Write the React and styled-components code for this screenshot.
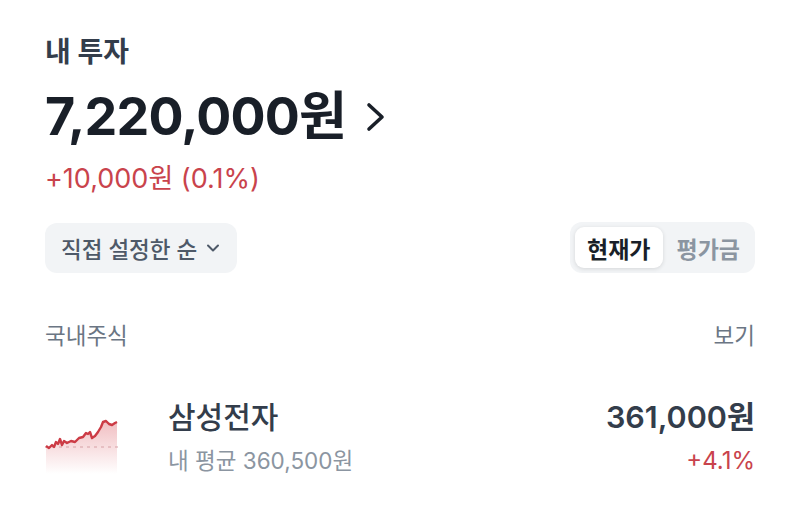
import styled, { createGlobalStyle } from "styled-components";

const Global = createGlobalStyle`
  body {
    margin: 0;
    background: #fff;
    font-family: "Inter", "Noto Sans CJK KR", sans-serif;
  }
`;

const stocks = [
  { name: "삼성전자", avg: "내 평균 360,500원", price: "361,000원", rate: "+4.1%" },
];

export default function App() {
  return (
    <Page>
      <Global />
      <Title>내 투자</Title>
      <TotalRow>
        <Total>7,220,000원</Total>
        <svg width="22" height="32" viewBox="0 0 22 32">
          <path d="M4 4 L17 16 L4 28" fill="none" stroke="#191f28" strokeWidth="3.6" strokeLinecap="round" strokeLinejoin="round" />
        </svg>
      </TotalRow>
      <Gain>+10,000원 (0.1%)</Gain>
      <Controls>
        <SortButton>
          직접 설정한 순
          <svg width="16" height="16" viewBox="0 0 16 16">
            <path d="M3 5.5 L8 10.5 L13 5.5" fill="none" stroke="#4e5968" strokeWidth="2" strokeLinecap="round" strokeLinejoin="round" />
          </svg>
        </SortButton>
        <Segment>
          <SegItem active>현재가</SegItem>
          <SegItem>평가금</SegItem>
        </Segment>
      </Controls>
      <SectionHead>
        <span>국내주식</span>
        <span>보기</span>
      </SectionHead>
      {stocks.map((s) => (
        <StockRow key={s.name}>
          <Spark />
          <StockInfo>
            <StockName>{s.name}</StockName>
            <StockSub>{s.avg}</StockSub>
          </StockInfo>
          <StockPrice>
            <Price>{s.price}</Price>
            <Rate>{s.rate}</Rate>
          </StockPrice>
        </StockRow>
      ))}
    </Page>
  );
}

function Spark() {
  const pts =
    "1,28 4,30 7,27 9,29 11,24 13,26 15,21 17,27 19,23 22,25 26,23 30,24 34,20 38,19 41,15 43,16 45,14 47,20 50,18 53,14 56,9 58,4 61,3 64,6 67,7 70,5 72,4";
  return (
    <SparkBox>
      <svg width="74" height="56" viewBox="0 0 74 56">
        <defs>
          <linearGradient id="sg" x1="0" y1="0" x2="0" y2="1">
            <stop offset="0" stopColor="#d6454f" stopOpacity="0.35" />
            <stop offset="1" stopColor="#d6454f" stopOpacity="0" />
          </linearGradient>
        </defs>
        <polygon points={`1,56 ${pts} 72,56`} fill="url(#sg)" />
        <line x1="0" y1="29" x2="74" y2="29" stroke="#d6a0a5" strokeWidth="1" strokeDasharray="3 4" />
        <polyline points={pts} fill="none" stroke="#cc3b45" strokeWidth="2.4" strokeLinejoin="round" />
      </svg>
    </SparkBox>
  );
}

const Page = styled.div`
  padding: 34px 45px 0;
  width: 800px;
  box-sizing: border-box;
`;

const Title = styled.div`
  font-size: 28px;
  font-weight: 700;
  color: #333d4b;
  line-height: 36px;
`;

const TotalRow = styled.div`
  display: flex;
  align-items: center;
  gap: 19px;
  margin-top: 15px;
`;

const Total = styled.div`
  font-size: 52px;
  font-weight: 700;
  color: #191f28;
  letter-spacing: -0.8px;
  line-height: 64px;
`;

const Gain = styled.div`
  margin-top: 12px;
  font-size: 27px;
  color: #c9434c;
  line-height: 36px;
`;

const Controls = styled.div`
  display: flex;
  justify-content: space-between;
  align-items: center;
  margin-top: 25px;
`;

const SortButton = styled.div`
  display: flex;
  align-items: center;
  gap: 8px;
  height: 50px;
  padding: 0 16px;
  box-sizing: border-box;
  background: #f2f4f6;
  border-radius: 12px;
  font-size: 22.5px;
  font-weight: 500;
  color: #4e5968;
`;

const Segment = styled.div`
  display: flex;
  gap: 4px;
  padding: 5px;
  background: #f2f4f6;
  border-radius: 12px;
`;

const SegItem = styled.div`
  height: 41px;
  display: flex;
  align-items: center;
  padding: 0 ${(p) => (p.active ? "12px" : "10px")};
  border-radius: 9px;
  font-size: 23px;
  font-weight: 700;
  color: ${(p) => (p.active ? "#191f28" : "#8b95a1")};
  background: ${(p) => (p.active ? "#fff" : "transparent")};
  box-shadow: ${(p) => (p.active ? "0 1px 4px rgba(0,0,0,0.12)" : "none")};
`;

const SectionHead = styled.div`
  display: flex;
  justify-content: space-between;
  margin-top: 47px;
  font-size: 22.5px;
  color: #6b7684;
  line-height: 32px;
`;

const StockRow = styled.div`
  display: flex;
  align-items: center;
  margin-top: 46px;
`;

const SparkBox = styled.div`
  width: 123px;
  display: flex;
  align-items: center;
  padding-top: 16px;
`;

const StockInfo = styled.div`
  display: flex;
  flex-direction: column;
  gap: 9px;
  flex: 1;
`;

const StockName = styled.div`
  font-size: 30px;
  font-weight: 500;
  color: #333d4b;
  line-height: 38px;
`;

const StockSub = styled.div`
  font-size: 22.5px;
  color: #8b95a1;
  line-height: 32px;
`;

const StockPrice = styled.div`
  display: flex;
  flex-direction: column;
  align-items: flex-end;
  gap: 9px;
`;

const Price = styled.div`
  font-size: 30.5px;
  font-weight: 600;
  color: #333d4b;
  line-height: 38px;
`;

const Rate = styled.div`
  font-size: 24px;
  color: #c9434c;
  line-height: 32px;
`;
